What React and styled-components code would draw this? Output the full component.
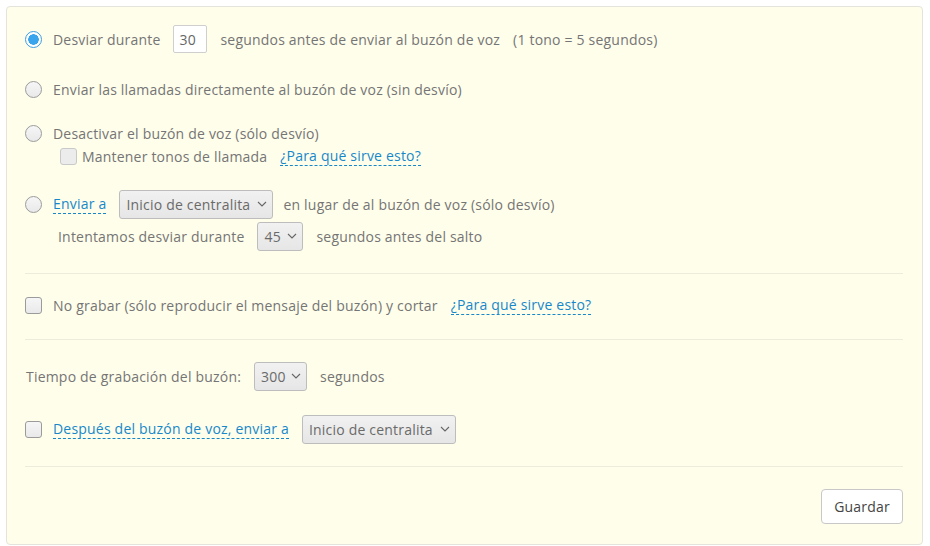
import React, { useState } from 'react';
import styled, { createGlobalStyle } from 'styled-components';

const GlobalStyle = createGlobalStyle`
  body {
    margin: 0;
    padding: 6px;
    background: #fff;
    font-family: "Open Sans", "Liberation Sans", sans-serif;
    font-size: 14px;
    letter-spacing: 0.2px;
    color: #757575;
  }
`;

const Chevron = () => (
  <svg width="10" height="6" viewBox="0 0 10 6">
    <path d="M1 1l4 4 4-4" fill="none" stroke="#666" strokeWidth="1.1" />
  </svg>
);

const App = () => {
  const [mode, setMode] = useState('desviar');

  return (
    <>
      <GlobalStyle />
      <Panel>
        <Row $mt={0} $h={30}>
          <Radio $checked={mode === 'desviar'} onClick={() => setMode('desviar')} />
          <Label>Desviar durante</Label>
          <NumberInput defaultValue="30" />
          <Label>segundos antes de enviar al buzón de voz</Label>
          <Label>(1 tono = 5 segundos)</Label>
        </Row>

        <Row $mt={20} $h={30}>
          <Radio $checked={mode === 'directo'} onClick={() => setMode('directo')} />
          <Label>Enviar las llamadas directamente al buzón de voz (sin desvío)</Label>
        </Row>

        <Row $mt={17} $h={24}>
          <Radio $checked={mode === 'desactivar'} onClick={() => setMode('desactivar')} />
          <Label>Desactivar el buzón de voz (sólo desvío)</Label>
        </Row>
        <SubRow $indent={35} $h={22}>
          <CheckBox $disabled />
          <Label $pull={6}>Mantener tonos de llamada</Label>
          <HelpLink>¿Para qué sirve esto?</HelpLink>
        </SubRow>

        <Row $mt={22} $h={30}>
          <Radio $checked={mode === 'enviar'} onClick={() => setMode('enviar')} />
          <HelpLink>Enviar a</HelpLink>
          <Select $w={154}>Inicio de centralita <Chevron /></Select>
          <Label $pull={3}>en lugar de al buzón de voz (sólo desvío)</Label>
        </Row>
        <SubRow $indent={33} $h={30} $mt={2}>
          <Label>Intentamos desviar durante</Label>
          <Select $w={46}>45 <Chevron /></Select>
          <Label>segundos antes del salto</Label>
        </SubRow>

        <Divider $mt={22} />

        <Row $mt={16} $h={30}>
          <CheckBox />
          <Label>No grabar (sólo reproducir el mensaje del buzón) y cortar</Label>
          <HelpLink>¿Para qué sirve esto?</HelpLink>
        </Row>

        <Divider $mt={19} />

        <Row $mt={21} $h={30} $pl={1}>
          <Label>Tiempo de grabación del buzón:</Label>
          <Select $w={53}>300 <Chevron /></Select>
          <Label>segundos</Label>
        </Row>

        <Row $mt={23} $h={30}>
          <CheckBox />
          <HelpLink>Después del buzón de voz, enviar a</HelpLink>
          <Select $w={154}>Inicio de centralita <Chevron /></Select>
        </Row>

        <Divider $mt={22} />

        <Footer>
          <Button>Guardar</Button>
        </Footer>
      </Panel>
    </>
  );
};

const Panel = styled.div`
  box-sizing: border-box;
  width: 917px;
  height: 539px;
  border: 1px solid #e4e4dc;
  border-radius: 4px;
  background: #fffeeb;
  padding: 17px 19px 0 18px;
  display: flex;
  flex-direction: column;
`;

const Row = styled.div`
  display: flex;
  align-items: center;
  gap: 13px;
  height: ${p => p.$h}px;
  margin-top: ${p => p.$mt || 0}px;
  padding-left: ${p => p.$pl || 0}px;
  white-space: nowrap;
`;

const SubRow = styled(Row)`
  padding-left: ${p => p.$indent}px;
`;

const Label = styled.span`
  margin-left: ${p => -(p.$pull || 0)}px;
`;

const Radio = styled.span`
  box-sizing: border-box;
  flex: none;
  width: 17px;
  height: 17px;
  border-radius: 50%;
  margin-right: -2px;
  cursor: pointer;
  border: 1px solid ${p => (p.$checked ? '#3d9de0' : '#9b9b9b')};
  background: ${p =>
    p.$checked
      ? 'radial-gradient(circle, #3aa5ec 0, #3aa5ec 5px, #fff 5.5px, #fff 8px)'
      : 'linear-gradient(#f6f6f6, #e9e9e9)'};
`;

const CheckBox = styled.span`
  box-sizing: border-box;
  flex: none;
  width: 17px;
  height: 17px;
  border-radius: 3px;
  margin-right: -2px;
  border: 1px solid ${p => (p.$disabled ? '#c9c9c9' : '#9b9b9b')};
  background: ${p => (p.$disabled ? '#ececec' : 'linear-gradient(#f6f6f6, #e9e9e9)')};
`;

const NumberInput = styled.input`
  box-sizing: border-box;
  width: 34px;
  height: 28px;
  padding: 0 5px;
  border: 1px solid #cfcfcf;
  border-radius: 2px;
  background: #fff;
  font-family: inherit;
  font-size: 14px;
  letter-spacing: inherit;
  color: #666;
  outline: none;
`;

const Select = styled.div`
  box-sizing: border-box;
  width: ${p => p.$w}px;
  height: 29px;
  padding: 0 5px 0 6px;
  display: flex;
  align-items: center;
  justify-content: space-between;
  border: 1px solid #bdbdbd;
  border-radius: 3px;
  background: linear-gradient(#f1f1f1, #e6e6e6);
  color: #6a6a6a;
  cursor: pointer;
`;

const HelpLink = styled.span`
  color: #1688c9;
  border-bottom: 1px dashed #1688c9;
  line-height: 19px;
  cursor: pointer;
`;

const Divider = styled.div`
  height: 1px;
  background: #ecebdc;
  margin-top: ${p => p.$mt}px;
`;

const Footer = styled.div`
  display: flex;
  justify-content: flex-end;
  margin-top: 22px;
`;

const Button = styled.button`
  box-sizing: border-box;
  width: 82px;
  height: 35px;
  background: #fff;
  border: 1px solid #c8c8c8;
  border-radius: 4px;
  font-family: inherit;
  font-size: 14px;
  letter-spacing: inherit;
  color: #444;
  cursor: pointer;
`;

export default App;
